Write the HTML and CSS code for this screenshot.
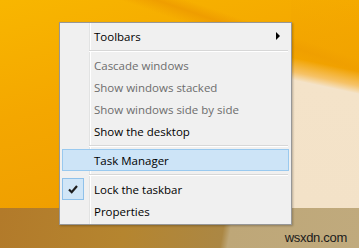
FILE: index.html
```html
<!DOCTYPE html>
<html lang="en">
<head>
  <meta charset="UTF-8">
  <meta name="viewport" content="width=device-width, initial-scale=1.0">
  <title>Taskbar menu</title>
  <link rel="stylesheet" href="styles.css">
</head>
<body>
  <div class="desktop"></div>

  <!-- taskbar with the watermark -->
  <div class="taskbar">
    <span class="mark">wsxdn.com</span>
  </div>

  <!-- context menu -->
  <div class="menu">
    <div class="item"><span class="icon"></span><span class="label">Toolbars</span><span class="arrow"></span></div>
    <div class="sep"></div>
    <div class="item disabled"><span class="icon"></span><span class="label">Cascade windows</span></div>
    <div class="item disabled"><span class="icon"></span><span class="label">Show windows stacked</span></div>
    <div class="item disabled"><span class="icon"></span><span class="label">Show windows side by side</span></div>
    <div class="item"><span class="icon"></span><span class="label">Show the desktop</span></div>
    <div class="sep"></div>
    <div class="item hot"><span class="icon"></span><span class="label">Task Manager</span></div>
    <div class="sep"></div>
    <div class="item"><span class="icon on">
      <svg width="22" height="22" viewBox="0 0 22 22"><path d="M7 11.5 L9.7 14.2 L15 8" fill="none" stroke="#1e1e1e" stroke-width="2.2"/></svg>
    </span><span class="label">Lock the taskbar</span></div>
    <div class="item"><span class="icon"></span><span class="label">Properties</span></div>
  </div>
</body>
</html>
```

FILE: styles.css
```css
html, body {
  margin: 0;
  padding: 0;
}
body {
  width: 359px;
  height: 248px;
  overflow: hidden;
  position: relative;
  font-family: "Open Sans", "Noto Sans", sans-serif;
}
.desktop {
  height: 208px;
  background:
    linear-gradient(192deg, rgba(245,170,0,0) 0px, rgba(241,163,0,0.6) 70px, #f6c266 84px, #f4e3c9 92px, #f3e2c8 208px) 291px 0 / 68px 208px no-repeat,
    linear-gradient(199deg, rgba(236,150,0,0) 56px, rgba(236,150,0,0.7) 66px, rgba(236,150,0,0) 78px),
    linear-gradient(165deg, #f8b600 0%, #f4a700 40%, #f0a000 70%, #e99300 100%);
}
.taskbar {
  height: 40px;
  display: flex;
  justify-content: flex-end;
  align-items: flex-end;
  padding: 0 12px 3px 0;
  box-sizing: border-box;
  background: linear-gradient(100deg, #b27a2a 0%, #b5852f 35%, #ab8744 62%, #bea778 64%, #c0aa7d 100%);
}
.mark {
  font-family: "Liberation Sans", Arial, sans-serif;
  font-size: 13px;
  letter-spacing: -0.3px;
  color: #1b1b1b;
}

.menu {
  position: absolute;
  left: 59px;
  top: 22px;
  width: 233px;
  box-sizing: border-box;
  padding: 2px;
  border: 1px solid #979797;
  background:
    linear-gradient(#e2e3e3, #e2e3e3) 29px 0 / 1px 100% no-repeat,
    linear-gradient(#ffffff, #ffffff) 30px 0 / 1px 100% no-repeat,
    #f0f0f0;
  box-shadow: 1px 1px 2px rgba(0, 0, 0, 0.25);
  font-size: 11.5px;
  color: #000;
}
.item {
  height: 22px;
  display: flex;
  align-items: center;
}
.icon {
  width: 22px;
  height: 22px;
  flex: none;
}
.icon.on {
  background: #d1e6f7;
  box-shadow: inset 0 0 0 1px #8fc1ea;
}
.icon svg {
  display: block;
}
.label {
  margin-left: 10px;
}
.disabled {
  color: #6d6d6d;
}
.hot {
  background: #cde4f7;
  box-shadow: inset 0 0 0 1px #99c9ef;
}
.arrow {
  margin-left: auto;
  margin-right: 9px;
  width: 0;
  height: 0;
  border-left: 4px solid #000;
  border-top: 4px solid transparent;
  border-bottom: 4px solid transparent;
}
.sep {
  margin: 3px 1px 2px 27px;
  border-top: 1px solid #d7d7d7;
  border-bottom: 1px solid #fff;
}
```
